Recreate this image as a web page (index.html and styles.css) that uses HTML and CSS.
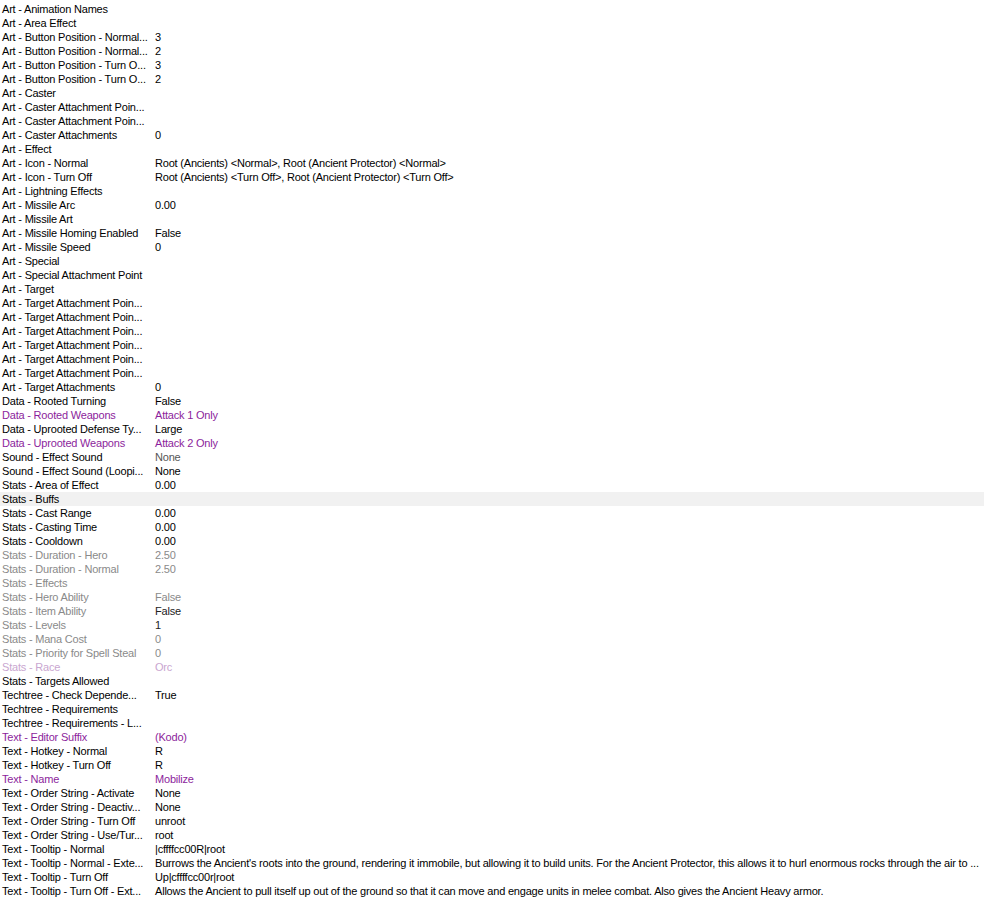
FILE: index.html
```html
<!DOCTYPE html>
<html lang="en">
<head>
  <meta charset="UTF-8">
  <title>Object Editor - Mobilize</title>
  <link rel="stylesheet" href="styles.css">
</head>
<body>

<div class="fields">
  <div class="row"><span class="name">Art - Animation Names</span><span class="value"></span></div>
  <div class="row"><span class="name">Art - Area Effect</span><span class="value"></span></div>
  <div class="row"><span class="name">Art - Button Position - Normal...</span><span class="value">3</span></div>
  <div class="row"><span class="name">Art - Button Position - Normal...</span><span class="value">2</span></div>
  <div class="row"><span class="name">Art - Button Position - Turn O...</span><span class="value">3</span></div>
  <div class="row"><span class="name">Art - Button Position - Turn O...</span><span class="value">2</span></div>
  <div class="row"><span class="name">Art - Caster</span><span class="value"></span></div>
  <div class="row"><span class="name">Art - Caster Attachment Poin...</span><span class="value"></span></div>
  <div class="row"><span class="name">Art - Caster Attachment Poin...</span><span class="value"></span></div>
  <div class="row"><span class="name">Art - Caster Attachments</span><span class="value">0</span></div>
  <div class="row"><span class="name">Art - Effect</span><span class="value"></span></div>
  <div class="row"><span class="name">Art - Icon - Normal</span><span class="value">Root (Ancients) &lt;Normal&gt;, Root (Ancient Protector) &lt;Normal&gt;</span></div>
  <div class="row"><span class="name">Art - Icon - Turn Off</span><span class="value">Root (Ancients) &lt;Turn Off&gt;, Root (Ancient Protector) &lt;Turn Off&gt;</span></div>
  <div class="row"><span class="name">Art - Lightning Effects</span><span class="value"></span></div>
  <div class="row"><span class="name">Art - Missile Arc</span><span class="value">0.00</span></div>
  <div class="row"><span class="name">Art - Missile Art</span><span class="value"></span></div>
  <div class="row"><span class="name">Art - Missile Homing Enabled</span><span class="value">False</span></div>
  <div class="row"><span class="name">Art - Missile Speed</span><span class="value">0</span></div>
  <div class="row"><span class="name">Art - Special</span><span class="value"></span></div>
  <div class="row"><span class="name">Art - Special Attachment Point</span><span class="value"></span></div>
  <div class="row"><span class="name">Art - Target</span><span class="value"></span></div>
  <div class="row"><span class="name">Art - Target Attachment Poin...</span><span class="value"></span></div>
  <div class="row"><span class="name">Art - Target Attachment Poin...</span><span class="value"></span></div>
  <div class="row"><span class="name">Art - Target Attachment Poin...</span><span class="value"></span></div>
  <div class="row"><span class="name">Art - Target Attachment Poin...</span><span class="value"></span></div>
  <div class="row"><span class="name">Art - Target Attachment Poin...</span><span class="value"></span></div>
  <div class="row"><span class="name">Art - Target Attachment Poin...</span><span class="value"></span></div>
  <div class="row"><span class="name">Art - Target Attachments</span><span class="value">0</span></div>
  <div class="row"><span class="name">Data - Rooted Turning</span><span class="value">False</span></div>
  <div class="row changed"><span class="name">Data - Rooted Weapons</span><span class="value">Attack 1 Only</span></div>
  <div class="row"><span class="name">Data - Uprooted Defense Ty...</span><span class="value">Large</span></div>
  <div class="row changed"><span class="name">Data - Uprooted Weapons</span><span class="value">Attack 2 Only</span></div>
  <div class="row"><span class="name">Sound - Effect Sound</span><span class="value dim">None</span></div>
  <div class="row"><span class="name">Sound - Effect Sound (Loopi...</span><span class="value">None</span></div>
  <div class="row"><span class="name">Stats - Area of Effect</span><span class="value">0.00</span></div>
  <div class="row selected"><span class="name">Stats - Buffs</span><span class="value"></span></div>
  <div class="row"><span class="name">Stats - Cast Range</span><span class="value">0.00</span></div>
  <div class="row"><span class="name">Stats - Casting Time</span><span class="value">0.00</span></div>
  <div class="row"><span class="name">Stats - Cooldown</span><span class="value">0.00</span></div>
  <div class="row faded"><span class="name">Stats - Duration - Hero</span><span class="value">2.50</span></div>
  <div class="row faded"><span class="name">Stats - Duration - Normal</span><span class="value">2.50</span></div>
  <div class="row faded"><span class="name">Stats - Effects</span><span class="value"></span></div>
  <div class="row faded"><span class="name">Stats - Hero Ability</span><span class="value">False</span></div>
  <div class="row faded"><span class="name">Stats - Item Ability</span><span class="value dark">False</span></div>
  <div class="row faded"><span class="name">Stats - Levels</span><span class="value dark">1</span></div>
  <div class="row faded"><span class="name">Stats - Mana Cost</span><span class="value">0</span></div>
  <div class="row faded"><span class="name">Stats - Priority for Spell Steal</span><span class="value">0</span></div>
  <div class="row faded-changed"><span class="name">Stats - Race</span><span class="value">Orc</span></div>
  <div class="row"><span class="name">Stats - Targets Allowed</span><span class="value"></span></div>
  <div class="row"><span class="name">Techtree - Check Depende...</span><span class="value">True</span></div>
  <div class="row"><span class="name">Techtree - Requirements</span><span class="value"></span></div>
  <div class="row"><span class="name">Techtree - Requirements - L...</span><span class="value"></span></div>
  <div class="row changed"><span class="name">Text - Editor Suffix</span><span class="value">(Kodo)</span></div>
  <div class="row"><span class="name">Text - Hotkey - Normal</span><span class="value">R</span></div>
  <div class="row"><span class="name">Text - Hotkey - Turn Off</span><span class="value">R</span></div>
  <div class="row changed"><span class="name">Text - Name</span><span class="value">Mobilize</span></div>
  <div class="row"><span class="name">Text - Order String - Activate</span><span class="value">None</span></div>
  <div class="row"><span class="name">Text - Order String - Deactiv...</span><span class="value">None</span></div>
  <div class="row"><span class="name">Text - Order String - Turn Off</span><span class="value">unroot</span></div>
  <div class="row"><span class="name">Text - Order String - Use/Tur...</span><span class="value">root</span></div>
  <div class="row"><span class="name">Text - Tooltip - Normal</span><span class="value">|cffffcc00R|root</span></div>
  <div class="row"><span class="name">Text - Tooltip - Normal - Exte...</span><span class="value">Burrows the Ancient's roots into the ground, rendering it immobile, but allowing it to build units. For the Ancient Protector, this allows it to hurl enormous rocks through the air to ...</span></div>
  <div class="row"><span class="name">Text - Tooltip - Turn Off</span><span class="value">Up|cffffcc00r|root</span></div>
  <div class="row"><span class="name">Text - Tooltip - Turn Off - Ext...</span><span class="value">Allows the Ancient to pull itself up out of the ground so that it can move and engage units in melee combat. Also gives the Ancient Heavy armor.</span></div>
</div>

</body>
</html>
```

FILE: styles.css
```css
body {
  margin: 0;
  padding: 2px 0 0 0;
  background: #ffffff;
  font-family: "Liberation Sans", Arial, sans-serif;
  font-size: 11px;
  letter-spacing: -0.2px;
  color: #000000;
}

.fields {
  display: flex;
  flex-direction: column;
}

.row {
  display: grid;
  grid-template-columns: 153px 1fr;
  height: 14px;
  line-height: 14px;
  white-space: nowrap;
  overflow: hidden;
}

.row .name {
  padding-left: 2px;
  overflow: hidden;
}

.row .value {
  padding-left: 2px;
  overflow: hidden;
}

/* fields changed from default */
.changed {
  color: #8c1e9c;
}

.selected {
  background-color: #f1f1f1;
}

/* fields not used by this ability */
.faded {
  color: #8a8a8a;
}

.faded-changed {
  color: #c9a6d0;
}

.value.dim {
  color: #555;
}

.value.dark {
  color: #222;
}
```
